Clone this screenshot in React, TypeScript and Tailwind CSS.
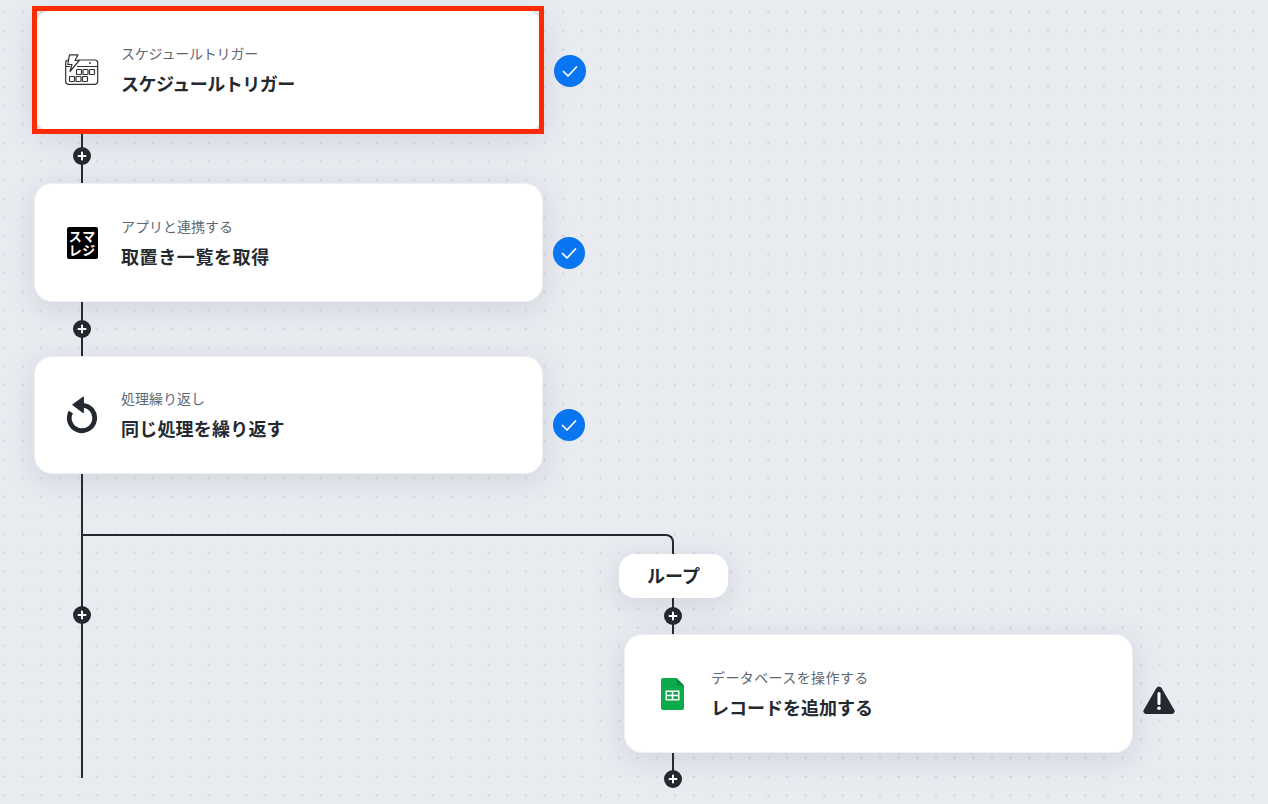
import React from 'react';

const jp = "font-['Inter','Noto_Sans_CJK_JP',sans-serif]";

const PlusDot = () => (
  <div className="flex h-[18px] w-[18px] shrink-0 items-center justify-center rounded-full bg-[#24292f]">
    <svg width="10" height="10" viewBox="0 0 10 10" fill="none">
      <path d="M5 1.5v7M1.500 5h7" stroke="#fff" strokeWidth="2" strokeLinecap="round" />
    </svg>
  </div>
);

// vertical connector with a plus button in the middle
const Connector = () => (
  <div className="ml-[47px] flex h-[54px] w-[2px] items-center justify-center bg-[#24292f]">
    <PlusDot />
  </div>
);

const CheckBadge = () => (
  <div className="flex h-8 w-8 items-center justify-center rounded-full bg-[#0a75f0]">
    <svg width="18" height="18" viewBox="0 0 18 18" fill="none">
      <path d="M2.500 9.500l4.500 4.500 8.500-9" stroke="#fff" strokeWidth="1.700" strokeLinecap="round" strokeLinejoin="round" />
    </svg>
  </div>
);

const ScheduleIcon = () => (
  <svg width="34" height="32" viewBox="0 0 34 32" fill="none" stroke="#2f3439" strokeWidth="1.200">
    <path d="M12.500 6H30a2.700 2.700 0 0 1 2.700 2.700v18.900a2.700 2.700 0 0 1-2.700 2.700H3.400a2.700 2.700 0 0 1-2.700-2.700V8.700A2.700 2.700 0 0 1 3.400 6H4" />
    <path d="M.7 12.500h4.500M12 12.500h20.700" />
    <path d="M4.500 .8H13L10 6.500h4.200L5 17.500 7 10.500H2.800z" strokeLinejoin="round" />
    <circle cx="25" cy="9" r="0.900" fill="#2f3439" stroke="none" />
    <rect x="11.500" y="15.500" width="5" height="5" rx="0.800" />
    <rect x="18" y="15.500" width="5" height="5" rx="0.800" />
    <rect x="24.500" y="15.500" width="5" height="5" rx="0.800" />
    <rect x="4.500" y="22.500" width="5" height="5" rx="0.800" />
    <rect x="11" y="22.500" width="5" height="5" rx="0.800" />
    <rect x="17.500" y="22.500" width="5" height="5" rx="0.800" />
  </svg>
);

const SmaregiIcon = () => (
  <div className="grid h-8 w-[31px] grid-cols-2 place-items-center rounded-[2px] bg-black px-[2px] py-[2px] text-[13px] font-bold leading-[14px] text-white">
    <span>ス</span>
    <span>マ</span>
    <span>レ</span>
    <span>ジ</span>
  </div>
);

const LoopIcon = () => (
  <svg width="32" height="38" viewBox="0 0 32 38" fill="none">
    <path d="M16.500 9.300A12.700 12.700 0 1 1 4.800 16" stroke="#24292f" strokeWidth="4.800" />
    <path d="M17.300 1.200L6.900 8.700L17.300 16.500z" fill="#24292f" stroke="#24292f" strokeWidth="1.200" strokeLinejoin="round" />
  </svg>
);

const SheetsIcon = () => (
  <svg width="23" height="32" viewBox="0 0 23 32">
    <path d="M2 0h13.500L23 7.500V30a2 2 0 0 1-2 2H2a2 2 0 0 1-2-2V2a2 2 0 0 1 2-2z" fill="#0bab4b" />
    <path d="M15.500 0L23 7.500h-5.500a2 2 0 0 1-2-2z" fill="#0a8a3d" />
    <path d="M4.500 12.500h14v10h-14zM6 14v2.700h4.700V14zm6.300 0v2.700H17V14zM6 18.200V21h4.700v-2.800zm6.300 0V21H17v-2.800z" fill="#fff" fillRule="evenodd" />
  </svg>
);

const WarningIcon = () => (
  <svg width="32" height="28" viewBox="0 0 32 28">
    <path d="M13.400 2L1 23.500A2.800 2.800 0 0 0 3.500 28h25a2.800 2.800 0 0 0 2.500-4.500L18.600 2a3 3 0 0 0-5.200 0z" fill="#24292f" />
    <path d="M16 7.500v10" stroke="#fff" strokeWidth="3" strokeLinecap="round" />
    <circle cx="16" cy="22.300" r="1.800" fill="#fff" />
  </svg>
);

const cardShadow = 'shadow-[0_6px_28px_rgba(90,100,120,0.16)]';

const FlowCard = ({
  icon,
  label,
  title,
  height,
  labelClass = '',
  titleClass = '',
}: {
  icon: React.ReactNode;
  label: string;
  title: string;
  height: string;
  labelClass?: string;
  titleClass?: string;
}) => (
  <div className={`flex w-[509px] items-center rounded-[18px] border border-[#eef0f3] bg-white ${cardShadow} ${height}`}>
    <div className="flex w-[86px] shrink-0 items-center justify-center pl-[8px]">{icon}</div>
    <div className="flex flex-col gap-[10px] pt-[3px]">
      <span className={`text-[14px] leading-[18px] text-[#5f6872] ${labelClass}`}>{label}</span>
      <span className={`text-[18px] font-bold leading-[24px] text-[#24292f] ${titleClass}`}>{title}</span>
    </div>
  </div>
);

export default function App() {
  return (
    <div
      className={`relative h-[804px] w-[1268px] overflow-hidden bg-[#e8ebf0] bg-[radial-gradient(#d3d7de_1.2px,transparent_1.3px)] bg-[length:18.650px_18.650px] bg-[position:-5.300px_3px] ${jp}`}
    >
      {/* main column */}
      <div className="flex flex-col pl-[34px] pt-[10px]">
        <div className="relative h-[119px]">
          <FlowCard
            icon={<ScheduleIcon />}
            label="スケジュールトリガー"
            title="スケジュールトリガー"
            height="h-[122px] pb-[3px]"
            labelClass="tracking-[-0.2px]"
            titleClass="tracking-[-0.5px]"
          />
          {/* selected outline */}
          <div className="absolute left-[-2px] top-[-4px] h-[128px] w-[512px] border-[5px] border-[#ff2a00]" />
          <div className="absolute left-[520px] top-[45px]">
            <CheckBadge />
          </div>
        </div>
        <Connector />
        <div className="relative">
          <FlowCard icon={<SmaregiIcon />} label="アプリと連携する" title="取置き一覧を取得" height="h-[119px]" titleClass="tracking-[0.6px]" />
          <div className="absolute left-[519px] top-[54px]">
            <CheckBadge />
          </div>
        </div>
        <Connector />
        <div className="relative">
          <FlowCard icon={<LoopIcon />} label="処理繰り返し" title="同じ処理を繰り返す" height="h-[118px] pb-[1px]" titleClass="tracking-[0.2px]" />
          <div className="absolute left-[519px] top-[53px]">
            <CheckBadge />
          </div>
        </div>
        <div className="ml-[47px] flex h-[304px] w-[2px] justify-center bg-[#24292f] pt-[132px]">
          <PlusDot />
        </div>
      </div>

      {/* loop branch */}
      <div className="absolute left-[81px] top-[534px] h-[20px] w-[593px] rounded-tr-[8px] border-r-2 border-t-2 border-[#24292f]" />
      <div className={`absolute left-[619px] top-[554px] flex h-[44px] w-[109px] items-center justify-center rounded-[16px] bg-white text-[18px] font-bold text-[#24292f] ${cardShadow}`}>
        ループ
      </div>
      <div className="absolute left-[672px] top-[598px] flex h-[36px] w-[2px] items-center justify-center bg-[#24292f]">
        <PlusDot />
      </div>
      <div className="absolute left-[624px] top-[634px]">
        <FlowCard icon={<SheetsIcon />} label="データベースを操作する" title="レコードを追加する" height="h-[119px]" labelClass="tracking-[0.4px]" />
      </div>
      <div className="absolute left-[1143px] top-[686px]">
        <WarningIcon />
      </div>
      <div className="absolute left-[672px] top-[753px] flex h-[26px] w-[2px] items-end justify-center bg-[#24292f]">
        <div className="translate-y-[9px]">
          <PlusDot />
        </div>
      </div>
    </div>
  );
}
